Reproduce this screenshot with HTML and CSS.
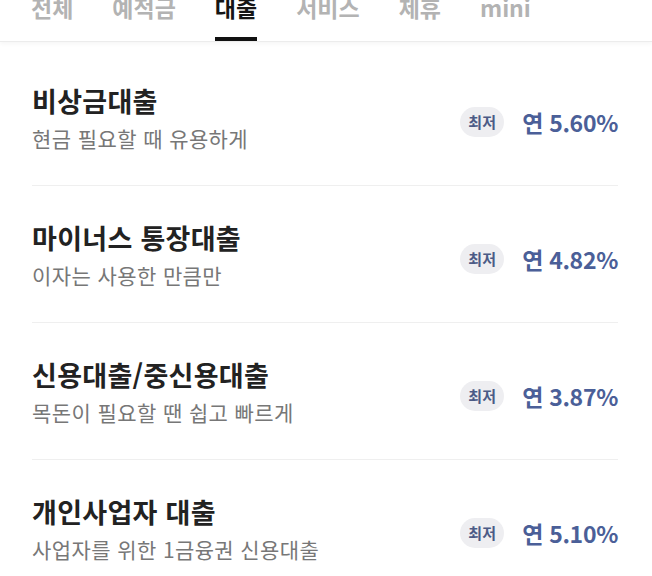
FILE: index.html
```html
<!DOCTYPE html>
<html lang="ko">
<head>
<meta charset="utf-8">
<link rel="stylesheet" href="styles.css">
</head>
<body>
<nav class="tabs">
  <div class="tab">전체</div>
  <div class="tab">예적금</div>
  <div class="tab active">대출</div>
  <div class="tab">서비스</div>
  <div class="tab">제휴</div>
  <div class="tab">mini</div>
</nav>
<ul class="list">
  <li class="item">
    <div class="info">
      <div class="title">비상금대출</div>
      <div class="desc">현금 필요할 때 유용하게</div>
    </div>
    <div class="rate-box">
      <span class="badge">최저</span>
      <span class="rate">연 5.60%</span>
    </div>
  </li>
  <li class="item">
    <div class="info">
      <div class="title">마이너스 통장대출</div>
      <div class="desc">이자는 사용한 만큼만</div>
    </div>
    <div class="rate-box">
      <span class="badge">최저</span>
      <span class="rate">연 4.82%</span>
    </div>
  </li>
  <li class="item">
    <div class="info">
      <div class="title">신용대출/중신용대출</div>
      <div class="desc">목돈이 필요할 땐 쉽고 빠르게</div>
    </div>
    <div class="rate-box">
      <span class="badge">최저</span>
      <span class="rate">연 3.87%</span>
    </div>
  </li>
  <li class="item">
    <div class="info">
      <div class="title">개인사업자 대출</div>
      <div class="desc">사업자를 위한 1금융권 신용대출</div>
    </div>
    <div class="rate-box">
      <span class="badge">최저</span>
      <span class="rate">연 5.10%</span>
    </div>
  </li>
</ul>
</body>
</html>
```
FILE: styles.css
```css
html, body {
  margin: 0;
  padding: 0;
  background: #ffffff;
  font-family: "Noto Sans CJK KR", "Noto Sans", sans-serif;
  overflow: hidden;
}

.tabs {
  display: flex;
  gap: 39px;
  height: 41px;
  padding-left: 31px;
  border-bottom: 1px solid #ececec;
  box-shadow: 0 2px 4px rgba(0, 0, 0, 0.04);
  position: relative;
  z-index: 1;
  background: #fff;
}

.tab {
  font-size: 23px;
  font-weight: 700;
  line-height: 23px;
  color: #b3b3b3;
  margin-top: -4px;
  box-sizing: border-box;
  border-bottom: 4px solid transparent;
}

.tab.active {
  color: #151515;
  border-bottom-color: #111;
}

.list {
  list-style: none;
  margin: 7px 0 0;
  padding: 0 34px 0 32px;
}

.item {
  display: flex;
  align-items: center;
  justify-content: space-between;
  padding: 35px 0 33px;
  border-bottom: 1px solid #efefef;
}

.title {
  font-size: 27px;
  font-weight: 700;
  line-height: 34px;
  letter-spacing: 0.3px;
  color: #222;
}

.desc {
  margin-top: 6px;
  font-size: 21px;
  line-height: 28px;
  letter-spacing: 0.4px;
  color: #777;
}

.rate-box {
  display: flex;
  align-items: center;
  gap: 18px;
  margin-top: 8px;
}

.badge {
  width: 44px;
  height: 30px;
  border-radius: 15px;
  background: #eeeef1;
  color: #4c5b86;
  font-size: 15px;
  font-weight: 700;
  line-height: 30px;
  text-align: center;
}

.rate {
  font-size: 23px;
  font-weight: 700;
  letter-spacing: -0.3px;
  color: #4b5f98;
  line-height: 30px;
}
```
